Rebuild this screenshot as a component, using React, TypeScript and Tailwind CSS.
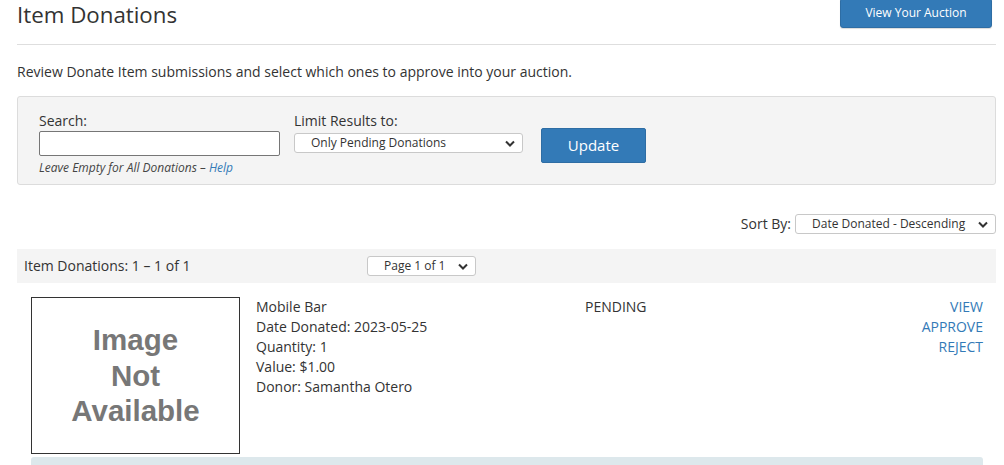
import React from "react";

function Chevron() {
  return (
    <svg width="10" height="7" viewBox="0 0 10 7" className="shrink-0">
      <path d="M1 1.5 L5 5.5 L9 1.5" fill="none" stroke="#333" strokeWidth="2" />
    </svg>
  );
}

function FakeSelect({ label, className }: { label: string; className: string }) {
  return (
    <div
      className={`flex items-center justify-between bg-white border border-[#c8c8c8] rounded-[3px] pl-[16px] pr-[7px] text-[12px] text-[#333] ${className}`}
    >
      <span className="leading-none">{label}</span>
      <Chevron />
    </div>
  );
}

export default function App() {
  return (
    <div className="w-[1004px] h-[465px] overflow-hidden bg-white font-['Open_Sans',sans-serif] text-[#333] text-[14px]">
      <div className="pl-[17px] pr-[8px]">
        {/* Header */}
        <div className="h-[45px] border-b border-[#dedede] flex justify-between items-start">
          <h1 className="pt-[2px] text-[22.3px] leading-[26px] font-normal">Item Donations</h1>
          <button className="mt-[-2px] mr-[4px] w-[152px] h-[30px] bg-[#337ab7] border border-[#2e6da4] rounded-[3px] text-white text-[12px] leading-none shadow-[0_1px_1px_rgba(0,0,0,0.15)]">
            View Your Auction
          </button>
        </div>

        <p className="mt-[17px] leading-[20px]">
          Review Donate Item submissions and select which ones to approve into your auction.
        </p>

        {/* Filter panel */}
        <div className="mt-[14px] h-[89px] bg-[#f4f4f4] border border-[#dcdcdc] rounded-[3px] pl-[21px] pt-[14px] flex items-start">
          <div className="w-[241px] flex flex-col">
            <label className="leading-[20px]">Search:</label>
            <input className="w-[241px] h-[25px] bg-white border border-[#767676] rounded-[2px]" />
            <div className="mt-[3px] text-[12px] leading-[18px] italic text-[#444]">
              Leave Empty for All Donations – <span className="text-[#337ab7]">Help</span>
            </div>
          </div>
          <div className="ml-[14px] flex flex-col">
            <label className="leading-[20px]">Limit Results to:</label>
            <FakeSelect label="Only Pending Donations" className="mt-[2px] w-[229px] h-[20px]" />
          </div>
          <button className="ml-[18px] mt-[17px] w-[105px] h-[35px] bg-[#337ab7] border border-[#2e6da4] rounded-[2px] text-white text-[15px] leading-none">
            Update
          </button>
        </div>

        {/* Sort */}
        <div className="mt-[29px] flex justify-end items-center gap-[4px]">
          <span className="leading-[20px]">Sort By:</span>
          <FakeSelect label="Date Donated - Descending" className="w-[201px] h-[20px]" />
        </div>

        {/* Results bar */}
        <div className="mt-[15px] h-[34px] bg-[#f4f4f4] flex items-center pl-[7px]">
          <span className="w-[343px] leading-[20px]">Item Donations: 1 – 1 of 1</span>
          <FakeSelect label="Page 1 of 1" className="w-[109px] h-[20px]" />
        </div>

        {/* Item */}
        <div className="mt-[14px] pl-[14px] pr-[13px] flex items-start">
          <div className="w-[209px] h-[157px] border border-[#333] flex flex-col items-center justify-center font-['Liberation_Sans',Arial,sans-serif] font-bold text-[#777] text-[29.5px] leading-[35.5px] text-center">
            <span>Image</span>
            <span>Not</span>
            <span>Available</span>
          </div>
          <div className="ml-[16px] w-[329px] flex flex-col leading-[20px]">
            <span>Mobile Bar</span>
            <span>Date Donated: 2023-05-25</span>
            <span>Quantity: 1</span>
            <span>Value: $1.00</span>
            <span>Donor: Samantha Otero</span>
          </div>
          <div className="leading-[20px]">PENDING</div>
          <div className="ml-auto flex flex-col items-end leading-[20px] text-[#337ab7]">
            <span>VIEW</span>
            <span>APPROVE</span>
            <span>REJECT</span>
          </div>
        </div>
        <div className="mt-[3px] ml-[14px] mr-[13px] h-[20px] bg-[#dde8ec] rounded-[3px]" />
      </div>
    </div>
  );
}
